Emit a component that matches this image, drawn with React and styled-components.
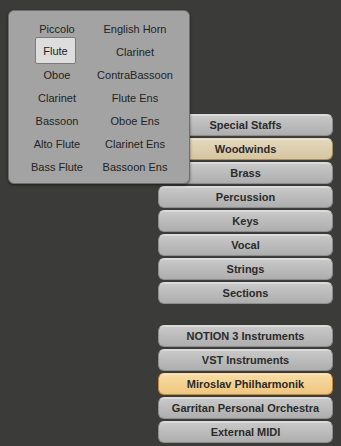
import React from 'react'
import styled, { createGlobalStyle } from 'styled-components'

const Global = createGlobalStyle`
  html, body {
    margin: 0;
    padding: 0;
    background: #3b3b39;
    font-family: "Liberation Sans", Arial, sans-serif;
  }
`

const Stage = styled.div`
  position: relative;
  width: 341px;
  height: 446px;
  overflow: hidden;
  background: #3b3b39;
  box-sizing: border-box;
  padding: 114px 0 0 158px;
`

const Stack = styled.div`
  display: flex;
  flex-direction: column;
  gap: 2px;
  width: 175px;
`

const Group = styled.div`
  display: flex;
  flex-direction: column;
  gap: 2px;
  margin-top: ${p => p.$gap || 0}px;
`

const tones = {
  plain: ['#c8c9c8', '#adaead', '#8c8d8c'],
  wood: ['#e4d8bc', '#d6c6a2', '#a8915f'],
  gold: ['#f9dca2', '#efc67f', '#c08a38'],
}

const Btn = styled.div`
  height: 22px;
  box-sizing: border-box;
  border-radius: 6px;
  background: linear-gradient(${p => tones[p.$tone][0]}, ${p => tones[p.$tone][1]});
  border: 1px solid ${p => tones[p.$tone][2]};
  border-top-color: ${p => p.$tone === 'plain' ? '#d8d9d8' : tones[p.$tone][0]};
  box-shadow: inset 0 1px 0 rgba(255,255,255,0.35);
  display: flex;
  align-items: center;
  justify-content: center;
  font-size: 11px;
  font-weight: bold;
  color: #2b2b2b;
  white-space: nowrap;
`

const Panel = styled.div`
  position: absolute;
  left: 8px;
  top: 10px;
  width: 182px;
  height: 174px;
  box-sizing: border-box;
  border-radius: 6px;
  background: #a2a3a2;
  border: 1px solid #6d6e6d;
  box-shadow: 0 1px 3px rgba(0,0,0,0.5);
  padding: 6px 0 0 3px;
  display: grid;
  grid-template-columns: 90px 66px;
  grid-auto-rows: 23px;
`

const Item = styled.div`
  justify-self: center;
  align-self: center;
  white-space: nowrap;
  font-size: 11px;
  color: #232323;
`

const Picked = styled(Item)`
  width: 41px;
  height: 27px;
  margin: -2px 3px 0 0;
  box-sizing: border-box;
  border: 1px solid #7a7b7a;
  border-radius: 2px;
  background: #dcdddc;
  display: flex;
  align-items: center;
  justify-content: center;
`

const left = ['Piccolo', 'Flute', 'Oboe', 'Clarinet', 'Bassoon', 'Alto Flute', 'Bass Flute']
const right = ['English Horn', 'Clarinet', 'ContraBassoon', 'Flute Ens', 'Oboe Ens', 'Clarinet Ens', 'Bassoon Ens']

const families = ['Special Staffs', 'Woodwinds', 'Brass', 'Percussion', 'Keys', 'Vocal', 'Strings', 'Sections']
const libraries = ['NOTION 3 Instruments', 'VST Instruments', 'Miroslav Philharmonik', 'Garritan Personal Orchestra', 'External MIDI']

export default function App() {
  return (
    <Stage>
      <Global />
      <Stack>
        <Group>
          {families.map(f => (
            <Btn key={f} $tone={f === 'Woodwinds' ? 'wood' : 'plain'}>{f}</Btn>
          ))}
        </Group>
        <Group $gap={19}>
          {libraries.map(l => (
            <Btn key={l} $tone={l === 'Miroslav Philharmonik' ? 'gold' : 'plain'}>{l}</Btn>
          ))}
        </Group>
      </Stack>
      <Panel>
        {left.map((name, i) => (
          <React.Fragment key={i}>
            {i === 1 ? <Picked>{name}</Picked> : <Item>{name}</Item>}
            <Item>{right[i]}</Item>
          </React.Fragment>
        ))}
      </Panel>
    </Stage>
  )
}
